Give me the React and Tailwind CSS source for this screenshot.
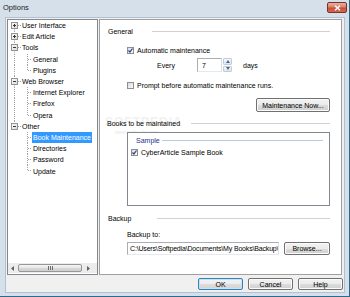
import React from "react";

const DOT = { stroke: "#a0a0a0", strokeDasharray: "1 1", strokeWidth: 1 };

const treeRows = [
  { type: "root", label: "User Interface", plus: true, up: false, down: true },
  { type: "root", label: "Edit Article", plus: true, up: true, down: true },
  { type: "root", label: "Tools", plus: false, up: true, down: true },
  { type: "child", label: "General", rootLine: true, last: false },
  { type: "child", label: "Plugins", rootLine: true, last: true },
  { type: "root", label: "Web Browser", plus: false, up: true, down: true },
  { type: "child", label: "Internet Explorer", rootLine: true, last: false },
  { type: "child", label: "Firefox", rootLine: true, last: false },
  { type: "child", label: "Opera", rootLine: true, last: true },
  { type: "root", label: "Other", plus: false, up: true, down: false },
  { type: "child", label: "Book Maintenance", rootLine: false, last: false, selected: true },
  { type: "child", label: "Directories", rootLine: false, last: false },
  { type: "child", label: "Password", rootLine: false, last: false },
  { type: "child", label: "Update", rootLine: false, last: true },
];

function TreeRow({ r }) {
  if (r.type === "root") {
    return (
      <div className="h-[11.2px] flex items-center">
        <svg width="14" height="11.2" viewBox="0 0 14 11.2" className="shrink-0">
          <defs>
            <linearGradient id="tbox" x1="0" y1="0" x2="1" y2="1">
              <stop offset="0" stopColor="#ffffff" />
              <stop offset="1" stopColor="#d8d8d8" />
            </linearGradient>
          </defs>
          {r.up && <line x1="6.5" y1="0" x2="6.5" y2="2.5" {...DOT} />}
          {r.down && <line x1="6.5" y1="8.5" x2="6.5" y2="11.2" {...DOT} />}
          <line x1="10" y1="5.5" x2="14" y2="5.5" {...DOT} />
          <rect x="3.5" y="2.5" width="6" height="6" fill="url(#tbox)" stroke="#939393" />
          <line x1="5" y1="5.5" x2="8" y2="5.5" stroke="#333" />
          {r.plus && <line x1="6.5" y1="4" x2="6.5" y2="7" stroke="#333" />}
        </svg>
        <span className="text-black whitespace-nowrap">{r.label}</span>
      </div>
    );
  }
  return (
    <div className="h-[11.2px] flex items-center">
      <svg width="24" height="11.2" viewBox="0 0 24 11.2" className="shrink-0">
        {r.rootLine && <line x1="6.5" y1="0" x2="6.5" y2="11.2" {...DOT} />}
        <line x1="19.5" y1="0" x2="19.5" y2={r.last ? 5.5 : 11.2} {...DOT} />
        <line x1="20" y1="5.5" x2="24" y2="5.5" {...DOT} />
      </svg>
      {r.selected ? (
        <span className="h-[11px] flex items-center px-[1px] bg-[#3399ff] text-white whitespace-nowrap">
          {r.label}
        </span>
      ) : (
        <span className="pl-[1px] text-black whitespace-nowrap">{r.label}</span>
      )}
    </div>
  );
}

function Tree() {
  return (
    <div className="w-[91px] h-[256px] bg-white border border-[#828790] flex flex-col shrink-0">
      <div className="flex flex-col flex-1 overflow-hidden">
        {treeRows.map((r, i) => (
          <TreeRow key={i} r={r} />
        ))}
      </div>
      <div className="h-[10px] mb-[1px] flex items-center bg-[#ececec]">
        <div className="w-[9px] h-full flex items-center justify-center">
          <svg width="3" height="5" viewBox="0 0 3 5">
            <path d="M3 0 L0 2.5 L3 5 Z" fill="#606060" />
          </svg>
        </div>
        <div className="ml-[1px] w-[64px] h-[8px] rounded-[2px] border border-[#979797] bg-[linear-gradient(#f5f5f5,#e6e6e6_50%,#d9d9d9_50%,#cfcfcf)] flex items-center justify-center gap-[1px]">
          <div className="w-px h-[4px] bg-[#6c6c6c]" />
          <div className="w-px h-[4px] bg-[#6c6c6c]" />
          <div className="w-px h-[4px] bg-[#6c6c6c]" />
        </div>
        <div className="w-[12px] h-full flex items-center justify-center">
          <svg width="3" height="5" viewBox="0 0 3 5">
            <path d="M0 0 L3 2.5 L0 5 Z" fill="#606060" />
          </svg>
        </div>
      </div>
    </div>
  );
}

function Check({ checked }) {
  return (
    <svg width="7" height="7" viewBox="0 0 7 7" className="shrink-0">
      <defs>
        <linearGradient id="cbg" x1="0" y1="0" x2="1" y2="1">
          <stop offset="0" stopColor="#d9d9d9" />
          <stop offset="1" stopColor="#fbfbfb" />
        </linearGradient>
      </defs>
      <rect x="0.5" y="0.5" width="6" height="6" fill="url(#cbg)" stroke="#8e8f8f" />
      {checked && (
        <path d="M1.5 3.5 L2.9 5 L5.5 1.5" fill="none" stroke="#2b3f95" strokeWidth="1.2" />
      )}
    </svg>
  );
}

function Btn({ children, className, def }) {
  return (
    <div
      className={
        def
          ? `flex items-center justify-center rounded-[2px] border border-[#3c7fb1] bg-[linear-gradient(#f4f4f4,#ececec_50%,#dedede_50%,#d2d2d2)] shadow-[inset_0_0_0_1px_#bfe5f8] text-black whitespace-nowrap ${className}`
          : `flex items-center justify-center rounded-[2px] border border-[#707070] bg-[linear-gradient(#f2f2f2,#ebebeb_50%,#dddddd_50%,#cfcfcf)] shadow-[inset_0_0_0_1px_#fbfbfb] text-black whitespace-nowrap ${className}`
      }
    >
      {children}
    </div>
  );
}

function SectionHeader({ label, labelW, pl, mt }) {
  return (
    <div className={`relative z-10 h-[10px] flex items-center ${mt} ${pl}`}>
      <span className={`${labelW} shrink-0 whitespace-nowrap text-black`}>{label}</span>
      <div className="flex-1 h-px bg-[#d2d2d2]" />
    </div>
  );
}

function Right() {
  return (
    <div className="relative w-[243px] h-[256px] bg-white border border-[#a0a0a0] flex flex-col pr-[11px] shrink-0">
      <div className="absolute left-[5px] top-[96px] pointer-events-none z-0 flex flex-col items-start">
        <span className="text-[12px] font-bold tracking-[1px] text-[#f1f1f1] leading-none">SOFTPEDIA</span>
        <span className="ml-[10px] mt-[2px] text-[5px] text-[#e8e8e8] leading-none">www.softpedia.com</span>
      </div>

      <SectionHeader label="General" labelW="w-[44px]" pl="pl-[8px]" mt="mt-[6px]" />

      <div className="mt-[9px] h-[10px] flex items-center pl-[27px] gap-[3px]">
        <Check checked />
        <span className="whitespace-nowrap">Automatic maintenance</span>
      </div>

      <div className="mt-[3px] h-[14px] flex items-center pl-[57px]">
        <span className="w-[40px] shrink-0">Every</span>
        <div className="w-[25px] h-[14px] border border-[#abadb3] border-b-[#e3e9ef] border-r-[#dbdfe6] bg-white flex items-center pl-[4px] shrink-0">
          7
        </div>
        <div className="ml-[1px] w-[9px] h-[14px] flex flex-col gap-px shrink-0">
          <div className="flex-1 rounded-[1px] border border-[#c3ccd6] bg-[linear-gradient(#f7f9fb,#dde5ee)] flex items-center justify-center">
            <svg width="4" height="3" viewBox="0 0 4 3">
              <path d="M0 3 L2 0 L4 3 Z" fill="#4d6a93" />
            </svg>
          </div>
          <div className="flex-1 rounded-[1px] border border-[#c3ccd6] bg-[linear-gradient(#f7f9fb,#dde5ee)] flex items-center justify-center">
            <svg width="4" height="3" viewBox="0 0 4 3">
              <path d="M0 0 L2 3 L4 0 Z" fill="#4d6a93" />
            </svg>
          </div>
        </div>
        <span className="ml-[11px]">days</span>
      </div>

      <div className="mt-[8px] h-[10px] flex items-center pl-[27px] gap-[3px]">
        <Check />
        <span className="whitespace-nowrap">Prompt before automatic maintenance runs.</span>
      </div>

      <div className="mt-[8px] h-[14px] flex justify-end">
        <Btn className="w-[74px] h-[14px]">Maintenance Now...</Btn>
      </div>

      <SectionHeader label="Books to be maintained" labelW="w-[84px]" pl="pl-[7px]" mt="mt-[6px]" />

      <div className="relative z-10 mt-[4px] ml-[27px] h-[74px] border border-[#828790] bg-white flex flex-col">
        <div className="mt-[3px] h-[8px] flex items-center pl-[8px] pr-[6px]">
          <span className="text-[#1e3287] whitespace-nowrap">Sample</span>
          <div className="ml-[2px] flex-1 h-px bg-[#b7c9e8]" />
        </div>
        <div className="mt-[3px] h-[10px] flex items-center pl-[3px] gap-[3px]">
          <Check checked />
          <span className="whitespace-nowrap">CyberArticle Sample Book</span>
        </div>
      </div>

      <SectionHeader label="Backup" labelW="w-[49px]" pl="pl-[8px]" mt="mt-[7px]" />

      <div className="mt-[6px] h-[10px] flex items-center pl-[27px]">
        <span>Backup to:</span>
      </div>

      <div className="mt-[3px] h-[13px] flex items-center pl-[27px]">
        <div className="w-[152px] h-[13px] border border-[#abadb3] border-b-[#e3e9ef] border-r-[#dbdfe6] bg-white flex items-center pl-[2px] overflow-hidden shrink-0">
          <span className="whitespace-nowrap tracking-[-0.17px]">C:\Users\Softpedia\Documents\My Books\Backup\</span>
        </div>
        <Btn className="ml-[5px] w-[46px] h-[13px]">Browse...</Btn>
      </div>
    </div>
  );
}

export default function App() {
  return (
    <div className="w-[350px] h-[297px] bg-[#d5e0eb] border-r border-b border-[#2f6a8a] flex flex-col overflow-hidden font-['Liberation_Sans',Arial,sans-serif] text-[7px] leading-none text-black">
      <div className="h-[17px] flex justify-between items-start shrink-0">
        <span className="pl-[3px] pt-[4px] text-[7.5px] text-[#1a1a1a]">Options</span>
        <div className="mt-[2px] mr-[2px] w-[20px] h-[11px] rounded-[2px] border border-[#7a3328] bg-[linear-gradient(#eab0a3,#d9816f_45%,#c94f38_55%,#d16a50)] flex items-center justify-center">
          <svg width="7" height="6" viewBox="0 0 7 6">
            <path d="M1 0.8 L6 5.2 M6 0.8 L1 5.2" stroke="#ffffff" strokeWidth="1.5" />
          </svg>
        </div>
      </div>

      <div className="w-[340px] h-[276px] ml-[5px] bg-[#f0f0f0] border border-[#b2c1d0] flex flex-col shrink-0">
        <div className="flex pt-[1px] pl-[1px] pr-[2px] gap-[1px]">
          <Tree />
          <Right />
        </div>
        <div className="flex justify-end gap-[5px] pt-[3px] pr-[1px]">
          <Btn def className="w-[45px] h-[12px]">OK</Btn>
          <Btn className="w-[45px] h-[12px]">Cancel</Btn>
          <Btn className="w-[45px] h-[12px]">Help</Btn>
        </div>
      </div>
    </div>
  );
}
